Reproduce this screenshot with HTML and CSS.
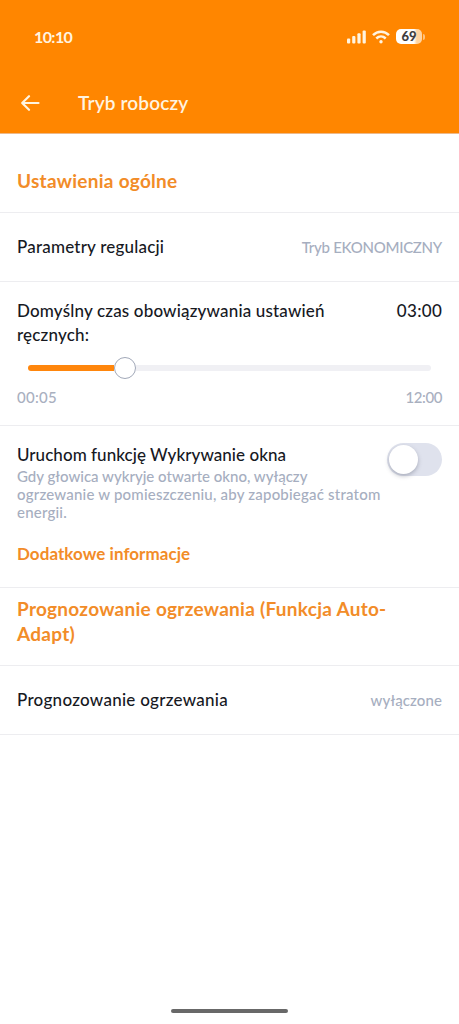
FILE: index.html
```html
<!DOCTYPE html>
<html lang="pl">
<head>
<meta charset="utf-8">
<meta name="viewport" content="width=device-width, initial-scale=1">
<title>Tryb roboczy</title>
<link rel="stylesheet" href="styles.css">
</head>
<body>
<div class="screen">
  <header class="header">
    <div class="status">
      <span class="clock">10:10</span>
      <div class="indicators">
        <svg class="signal" width="19" height="14" viewBox="0 0 19 14" fill="#fff4e0">
          <rect x="0" y="8.5" width="3.2" height="5" rx="1"/>
          <rect x="5.2" y="6" width="3.2" height="7.500" rx="1"/>
          <rect x="10.400" y="3.300" width="3.200" height="10.200" rx="1"/>
          <rect x="15.600" y="0.500" width="3.200" height="13" rx="1"/>
        </svg>
        <svg class="wifi" width="18" height="14" viewBox="0 0 18 14" fill="none" stroke="#fff4e0" stroke-width="2.500">
          <path d="M1 5.100C5.500 .5 12.500 .5 17 5.100"/>
          <path d="M4.300 8.500C7 5.900 11 5.900 13.700 8.500"/>
          <circle cx="9" cy="11.700" r="1.700" fill="#fff4e0" stroke="none"/>
        </svg>
        <div class="battery"><span class="level">69</span><i class="tip"></i></div>
      </div>
    </div>
    <div class="bar">
      <svg class="back" width="19" height="16" viewBox="0 0 19 16" fill="none" stroke="#fff4e0" stroke-width="2.200" stroke-linecap="round" stroke-linejoin="round">
        <path d="M17.500 8H1.200M8 1.200L1.200 8l6.800 6.800"/>
      </svg>
      <h1 class="title">Tryb roboczy</h1>
    </div>
  </header>
  <main>
    <section class="heading general"><h2>Ustawienia ogólne</h2></section>
    <section class="row">
      <span class="label params">Parametry regulacji</span>
      <span class="value mode">Tryb EKONOMICZNY</span>
    </section>
    <section class="duration">
      <div class="duration-top">
        <p class="label wrap">Domyślny czas obowiązywania ustawień<br>ręcznych:</p>
        <span class="label time">03:00</span>
      </div>
      <div class="slider"><div class="fill"></div><div class="knob"></div><div class="rest"></div></div>
      <div class="range"><span class="min">00:05</span><span class="max">12:00</span></div>
    </section>
    <section class="window">
      <div class="window-text">
        <p class="label detect">Uruchom funkcję Wykrywanie okna</p>
        <p class="hint">Gdy głowica wykryje otwarte okno, wyłączy<br><span class="loose">ogrzewanie w pomieszczeniu, aby zapobiegać stratom<br>energii.</span></p>
        <a class="more">Dodatkowe informacje</a>
      </div>
      <div class="toggle"><div class="thumb"></div></div>
    </section>
    <section class="heading adapt"><h2>Prognozowanie ogrzewania (Funkcja Auto-<br>Adapt)</h2></section>
    <section class="row">
      <span class="label forecast">Prognozowanie ogrzewania</span>
      <span class="value off">wyłączone</span>
    </section>
  </main>
  <div class="home"></div>
</div>
</body>
</html>
```

FILE: styles.css
```css
* { box-sizing: border-box; }
body, h1, h2, p { margin: 0; }
body {
  background: #fff;
  color: #17191f;
  font-family: Lato, "Noto Sans", sans-serif;
  font-weight: 500;
}
.screen { height: 1024px; display: flex; flex-direction: column; }
.header {
  height: 134px;
  flex: none;
  background: #ff8600;
  border-bottom: 1px solid #edb98a;
  color: #fff4e0;
}
.status {
  height: 73px;
  padding: 0 34px 0 34px;
  display: flex;
  align-items: center;
  justify-content: space-between;
}
.clock { font-size: 16px; font-weight: 700; letter-spacing: -0.6px; }
.indicators { display: flex; align-items: center; gap: 6px; }
.battery { display: flex; align-items: center; gap: 1px; }
.level {
  width: 26px;
  height: 15px;
  border-radius: 5px;
  background: linear-gradient(90deg, #fff 69%, #ffd4a1 80%);
  color: #3f3d40;
  font-size: 13px;
  font-weight: 900;
  line-height: 15px;
  text-align: center;
}
.tip { width: 2px; height: 6px; border-radius: 0 2px 2px 0; background: #ffc27c; }
.bar { height: 60px; padding-left: 21px; display: flex; align-items: center; gap: 38px; }
.title { margin-top: -2px; font-size: 19px; font-weight: 600; letter-spacing: 0.15px; }

.heading { border-bottom: 1px solid #ededf0; padding: 0 17px; color: #f28c28; }
.heading h2 { font-size: 19px; font-weight: 700; line-height: 25px; letter-spacing: 0.27px; white-space: nowrap; }
.general { height: 79px; padding-top: 34px; }
.adapt { height: 78px; padding-top: 8px; }
.row {
  height: 69px;
  padding: 0 17px;
  border-bottom: 1px solid #ededf0;
  display: flex;
  align-items: center;
  justify-content: space-between;
}
.label { font-size: 17px; line-height: 24px; white-space: nowrap; }
.params { letter-spacing: 0.2px; }
.wrap { letter-spacing: 0.17px; }
.time { letter-spacing: 0.4px; margin-right: -0.4px; }
.detect { letter-spacing: 0.05px; }
.forecast { letter-spacing: 0.27px; }
.value { font-size: 15px; color: #a6aec0; }
.mode { letter-spacing: -0.28px; }
.off { letter-spacing: 0.1px; }
.duration { height: 144px; padding: 17px 17px 0; border-bottom: 1px solid #ededf0; }
.duration-top { display: flex; justify-content: space-between; }
.slider { height: 22px; margin: 10px 11px 0; display: flex; align-items: center; }
.fill { width: 86px; height: 6px; border-radius: 3px 0 0 3px; background: #ff860c; }
.knob { width: 22px; height: 22px; border: 1px solid #a1a8b8; border-radius: 50%; background: #fff; }
.rest { flex: 1; height: 6px; border-radius: 0 3px 3px 0; background: #f0f0f4; }
.range {
  margin-top: 7px;
  display: flex;
  justify-content: space-between;
  font-size: 15px;
  line-height: 22px;
  color: #a9b0bf;
}
.min { letter-spacing: 0.25px; }
.max { letter-spacing: -0.4px; }
.window {
  height: 162px;
  padding: 17px 17px 0;
  border-bottom: 1px solid #ededf0;
  display: flex;
  justify-content: space-between;
}
.window-text { white-space: nowrap; }
.hint { font-size: 15px; line-height: 18px; color: #a6aec0; }
.loose { letter-spacing: 0.2px; }
.more { display: block; margin-top: 21px; font-size: 17px; font-weight: 700; line-height: 24px; letter-spacing: 0.05px; color: #f28c28; }
.toggle {
  width: 55px;
  height: 33px;
  flex: none;
  padding: 2px;
  border-radius: 17px;
  background: #dfe2ed;
}
.thumb { width: 29px; height: 29px; border-radius: 50%; background: #fff; box-shadow: 0 2px 4px rgba(70, 75, 95, .35); }
.home { width: 117px; height: 4px; margin: auto auto 11px; border-radius: 2px; background: #686868; }
```
